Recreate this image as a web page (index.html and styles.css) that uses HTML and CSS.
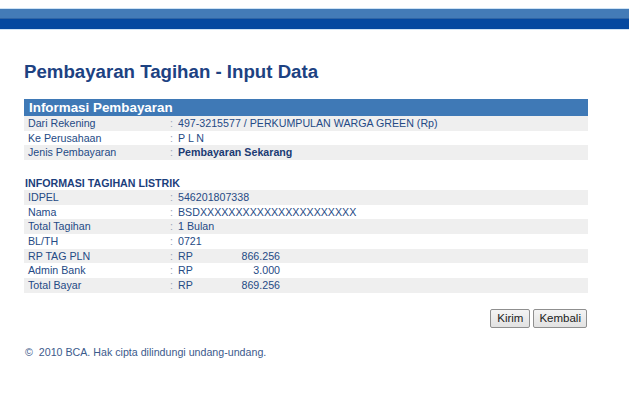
FILE: index.html
```html
<!DOCTYPE html>
<html>
<head>
<meta charset="utf-8">
<link rel="stylesheet" href="styles.css">
</head>
<body>
<div class="topbar"><div class="band-light"></div><div class="band-dark"></div></div>
<div class="content">
  <h1 class="title">Pembayaran Tagihan - Input Data</h1>
  <div class="section-head">Informasi Pembayaran</div>
  <div class="table">
    <div class="row alt"><span class="lbl">Dari Rekening</span><span class="colon">:</span><span class="val">497-3215577 / PERKUMPULAN WARGA GREEN (Rp)</span></div>
    <div class="row"><span class="lbl">Ke Perusahaan</span><span class="colon">:</span><span class="val">P L N</span></div>
    <div class="row alt"><span class="lbl">Jenis Pembayaran</span><span class="colon">:</span><span class="val bold">Pembayaran Sekarang</span></div>
  </div>
  <div class="sub-head">INFORMASI TAGIHAN LISTRIK</div>
  <div class="table">
    <div class="row alt"><span class="lbl">IDPEL</span><span class="colon">:</span><span class="val">546201807338</span></div>
    <div class="row"><span class="lbl">Nama</span><span class="colon">:</span><span class="val">BSDXXXXXXXXXXXXXXXXXXXXXX</span></div>
    <div class="row alt"><span class="lbl">Total Tagihan</span><span class="colon">:</span><span class="val">1 Bulan</span></div>
    <div class="row"><span class="lbl">BL/TH</span><span class="colon">:</span><span class="val">0721</span></div>
    <div class="row alt"><span class="lbl">RP TAG PLN</span><span class="colon">:</span><span class="val money"><span>RP</span><span>866.256</span></span></div>
    <div class="row"><span class="lbl">Admin Bank</span><span class="colon">:</span><span class="val money"><span>RP</span><span>3.000</span></span></div>
    <div class="row alt"><span class="lbl">Total Bayar</span><span class="colon">:</span><span class="val money"><span>RP</span><span>869.256</span></span></div>
  </div>
  <div class="actions">
    <button class="btn">Kirim</button>
    <button class="btn">Kembali</button>
  </div>
  <div class="footer">&copy;&nbsp; 2010 BCA. Hak cipta dilindungi undang-undang.</div>
</div>
</body>
</html>
```
FILE: styles.css
```css
html, body {
  margin: 0;
  padding: 0;
  background: #ffffff;
}
body {
  font-family: "Liberation Sans", Arial, sans-serif;
  font-size: 10.67px;
  color: #254a85;
}
.topbar {
  margin-top: 8px;
  border-top: 1px solid #cfe3f5;
  border-bottom: 1px solid #cfe3f5;
}
.band-light {
  height: 10px;
  background: #437bb7;
  border-bottom: 1px solid #2f64a4;
  box-sizing: border-box;
}
.band-dark {
  height: 10px;
  background: #0448a0;
}
.content {
  width: 564px;
  margin-left: 24px;
}
.title {
  margin: 0;
  padding-top: 29px;
  height: 26px;
  font-size: 18.67px;
  line-height: 26px;
  font-weight: bold;
  color: #1d4282;
}
.section-head {
  margin-top: 14px;
  height: 17px;
  line-height: 17px;
  background: #3f79b6;
  color: #ffffff;
  font-weight: bold;
  font-size: 13.4px;
  padding-left: 5px;
}
.table {
  display: flex;
  flex-direction: column;
}
.row {
  display: flex;
  height: 14.67px;
  line-height: 14.67px;
  background: #ffffff;
}
.row.alt {
  background: #efefef;
}
.lbl {
  width: 142px;
  padding-left: 4px;
}
.colon {
  width: 8px;
  color: #9aa6b8;
}
.val {
  flex: 1;
}
.bold {
  font-weight: bold;
  color: #1b3b73;
}
.money {
  flex: none;
  width: 102px;
  display: flex;
  justify-content: space-between;
}
.sub-head {
  margin-top: 16px;
  height: 14px;
  line-height: 14px;
  font-weight: bold;
  color: #1c3e7c;
  padding-left: 1px;
}
.actions {
  display: flex;
  justify-content: flex-end;
  gap: 3px;
  margin-top: 16px;
  padding-right: 1px;
}
.btn {
  font-family: "Liberation Sans", Arial, sans-serif;
  font-size: 11.5px;
  color: #222;
  background: linear-gradient(#f4f4f4, #e2e2e2);
  border: 1px solid #8f8f8f;
  border-radius: 2px;
  height: 19px;
  padding: 0 5px;
  margin: 0;
}
.btn:first-child {
  padding: 0 6px;
}
.footer {
  margin-top: 17px;
  padding-left: 1px;
  color: #3c5a8c;
  line-height: 14px;
}
```
